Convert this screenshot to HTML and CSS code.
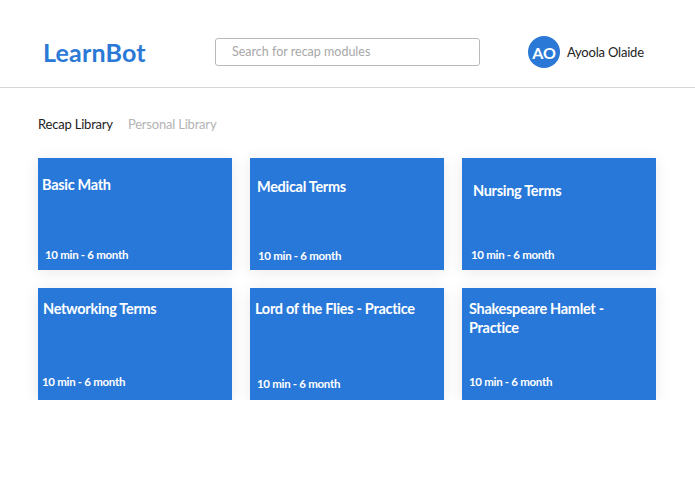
FILE: index.html
```html
<!DOCTYPE html>
<html lang="en">
<head>
<meta charset="utf-8">
<title>LearnBot</title>
<link rel="stylesheet" href="styles.css">
</head>
<body>
<header class="topbar">
  <div class="logo">LearnBot</div>
  <div class="search">Search for recap modules</div>
  <div class="user">
    <div class="avatar">AO</div>
    <div class="user-name">Ayoola Olaide</div>
  </div>
</header>
<nav class="tabs">
  <span class="tab tab-active">Recap Library</span>
  <span class="tab">Personal Library</span>
</nav>
<main class="grid">
  <div class="card c1"><div class="card-title">Basic Math</div><div class="card-meta">10 min - 6 month</div></div>
  <div class="card c2"><div class="card-title">Medical Terms</div><div class="card-meta">10 min - 6 month</div></div>
  <div class="card c3"><div class="card-title">Nursing Terms</div><div class="card-meta">10 min - 6 month</div></div>
  <div class="card c4"><div class="card-title">Networking Terms</div><div class="card-meta">10 min - 6 month</div></div>
  <div class="card c5"><div class="card-title">Lord of the Flies - Practice</div><div class="card-meta">10 min - 6 month</div></div>
  <div class="card c6"><div class="card-title">Shakespeare Hamlet - Practice</div><div class="card-meta">10 min - 6 month</div></div>
</main>
</body>
</html>
```
FILE: styles.css
```css
* { box-sizing: border-box; }
html, body { margin: 0; padding: 0; background: #ffffff; }
body {
  font-family: "Lato", "Liberation Sans", sans-serif;
  color: #222;
  width: 695px;
}
.topbar {
  display: flex;
  align-items: center;
  height: 88px;
  padding: 17px 0 0 43px;
  border-bottom: 1px solid #d6d6d6;
}
.logo {
  font-size: 25px;
  font-weight: 700;
  color: #2a79d6;
  width: 104px;
  letter-spacing: 0.2px;
}
.search {
  margin-left: 68px;
  width: 265px;
  height: 28px;
  border: 1px solid #b9b9b9;
  border-radius: 3px;
  padding-left: 16px;
  font-size: 12.5px;
  line-height: 26px;
  color: #a8a8a8;
}
.user {
  display: flex;
  align-items: center;
  margin-left: 48px;
}
.avatar {
  width: 32px;
  height: 32px;
  border-radius: 50%;
  background: #2a79d6;
  color: #fff;
  font-weight: 700;
  font-size: 16px;
  display: flex;
  align-items: center;
  justify-content: center;
}
.user-name {
  margin-left: 7px;
  font-size: 13px;
  letter-spacing: -0.2px;
  color: #222;
}
.tabs {
  display: flex;
  gap: 15px;
  padding: 28px 0 0 38px;
  font-size: 13px;
  line-height: 16px;
  letter-spacing: -0.2px;
}
.tab { color: #b3b3b3; }
.tab-active { color: #222; }
.grid {
  display: grid;
  grid-template-columns: repeat(3, 194px);
  grid-auto-rows: 112px;
  column-gap: 18px;
  row-gap: 18px;
  padding: 26px 0 0 38px;
}
.card {
  background: #2878d9;
  color: #fff;
  display: flex;
  flex-direction: column;
  box-shadow: 0 2px 14px rgba(0, 0, 0, 0.09);
  padding-right: 6px;
}
.card-title {
  font-size: 14.5px;
  font-weight: 700;
  line-height: 19px;
  letter-spacing: -0.3px;
}
.card-meta {
  margin-top: auto;
  font-size: 11.5px;
  font-weight: 700;
  line-height: 15px;
  letter-spacing: -0.3px;
}
.c1 { padding-top: 17px; padding-bottom: 8px; }
.c1 .card-title { padding-left: 4px; }
.c1 .card-meta { padding-left: 7px; }
.c2 { padding-top: 19px; padding-bottom: 7px; }
.c2 .card-title { padding-left: 7px; }
.c2 .card-meta { padding-left: 8px; }
.c3 { padding-top: 23px; padding-bottom: 8px; }
.c3 .card-title { padding-left: 11px; }
.c3 .card-meta { padding-left: 9px; }
.c4 { padding-top: 11px; padding-bottom: 11px; }
.c4 .card-title { padding-left: 5px; }
.c4 .card-meta { padding-left: 4px; }
.c5 { padding-top: 11px; padding-bottom: 9px; }
.c5 .card-title { padding-left: 5px; }
.c5 .card-meta { padding-left: 7px; }
.c6 { padding-top: 11px; padding-bottom: 11px; }
.c6 .card-title { padding-left: 7px; }
.c6 .card-meta { padding-left: 7px; }
```
